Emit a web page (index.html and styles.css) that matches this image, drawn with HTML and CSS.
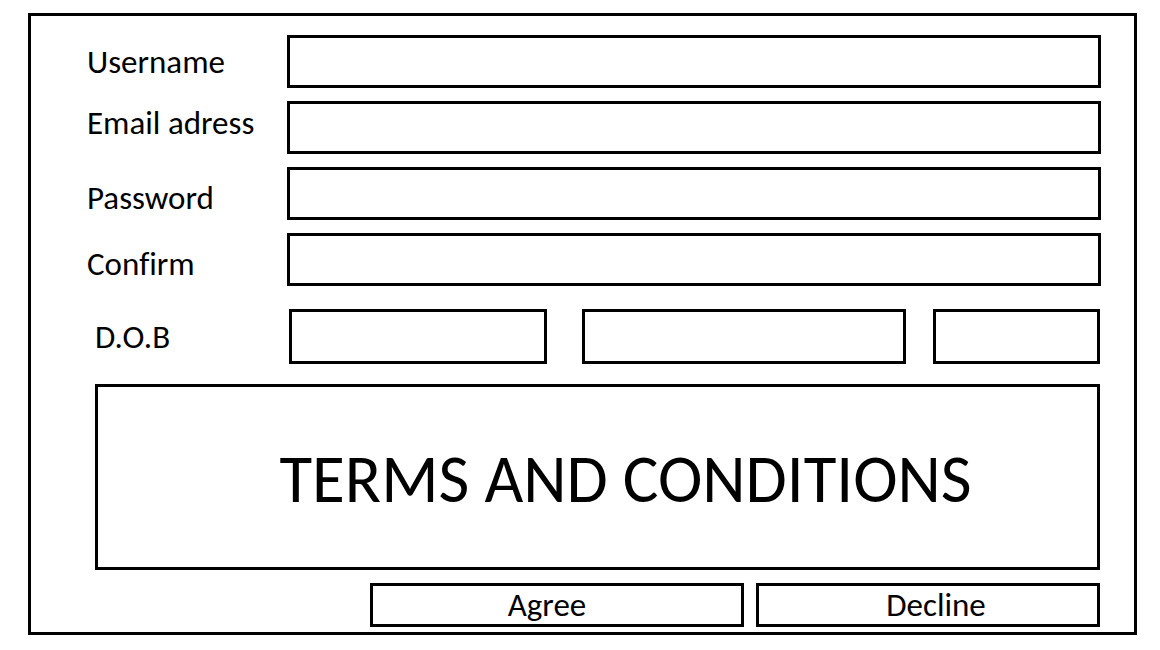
FILE: index.html
```
<!DOCTYPE html>
<html lang="en">
<head>
<meta charset="utf-8">
<meta name="viewport" content="width=device-width, initial-scale=1">
<title>Register</title>
<link rel="stylesheet" href="styles.css">
</head>
<body>
<form class="panel">
  <div class="rows">
    <div class="row">
      <label class="label" for="username">Username</label>
      <input class="field" id="username" type="text">
    </div>
    <div class="row">
      <label class="label label-high" for="email">Email adress</label>
      <input class="field" id="email" type="email">
    </div>
    <div class="row">
      <label class="label label-low" for="password">Password</label>
      <input class="field" id="password" type="password">
    </div>
    <div class="row">
      <label class="label label-low" for="confirm">Confirm</label>
      <input class="field" id="confirm" type="password">
    </div>
  </div>
  <div class="row row-dob">
    <label class="label" for="dob-day">D.O.B</label>
    <div class="dob">
      <input class="field" id="dob-day" type="text">
      <input class="field dob-month" id="dob-month" type="text" aria-label="Month of birth">
      <input class="field dob-year" id="dob-year" type="text" aria-label="Year of birth">
    </div>
  </div>
  <section class="terms">
    <h1 class="terms-title">TERMS AND CONDITIONS</h1>
  </section>
  <div class="actions">
    <button class="button button-agree" type="submit">Agree</button>
    <button class="button button-decline" type="button">Decline</button>
  </div>
</form>
</body>
</html>
```
FILE: styles.css
```
* {
  box-sizing: border-box;
}

body {
  margin: 0;
  padding: 13px 23px 15px 28px;
  background: #fff;
  color: #000;
  font-family: Carlito, Lato, sans-serif;
  font-size: 33px;
  font-variant-ligatures: none;
}

.panel {
  display: flex;
  flex-direction: column;
  padding: 19px 34px 5px 64px;
  border: 3px solid #000;
}

.rows {
  display: flex;
  flex-direction: column;
  gap: 13px;
  margin-left: -8px;
  margin-right: -1px;
}

.row {
  display: grid;
  grid-template-columns: 200px 1fr;
  align-items: center;
}

.row-dob {
  grid-template-columns: 194px 1fr;
  margin-top: 23px;
}

.label {
  line-height: 44px;
}

.label-high {
  align-self: start;
}

.label-low {
  align-self: end;
}

.field,
.button {
  width: 100%;
  min-width: 0;
  border: 3px solid #000;
  border-radius: 0;
  background: #fff;
  color: #000;
  font: inherit;
}

.field {
  height: 53px;
  padding: 0 12px;
}

.dob {
  display: grid;
  grid-template-columns: 258fr 35px 324fr 27px 167fr;
}

.dob .field {
  height: 55px;
}

.dob-month {
  grid-column: 3;
}

.dob-year {
  grid-column: 5;
}

.terms {
  display: flex;
  align-items: center;
  justify-content: center;
  min-height: 186px;
  margin-top: 20px;
  padding: 4px 0 0 56px;
  border: 3px solid #000;
}

.terms-title {
  margin: 0;
  font-size: 67px;
  font-weight: 400;
  line-height: 72px;
}

.actions {
  display: grid;
  grid-template-columns: 374fr 344fr;
  gap: 12px;
  margin-top: 13px;
  margin-left: 275px;
}

.button {
  height: 44px;
  padding: 0;
  line-height: 36px;
}

.button-agree {
  padding-right: 20px;
}

.button-decline {
  padding-left: 16px;
}
```
